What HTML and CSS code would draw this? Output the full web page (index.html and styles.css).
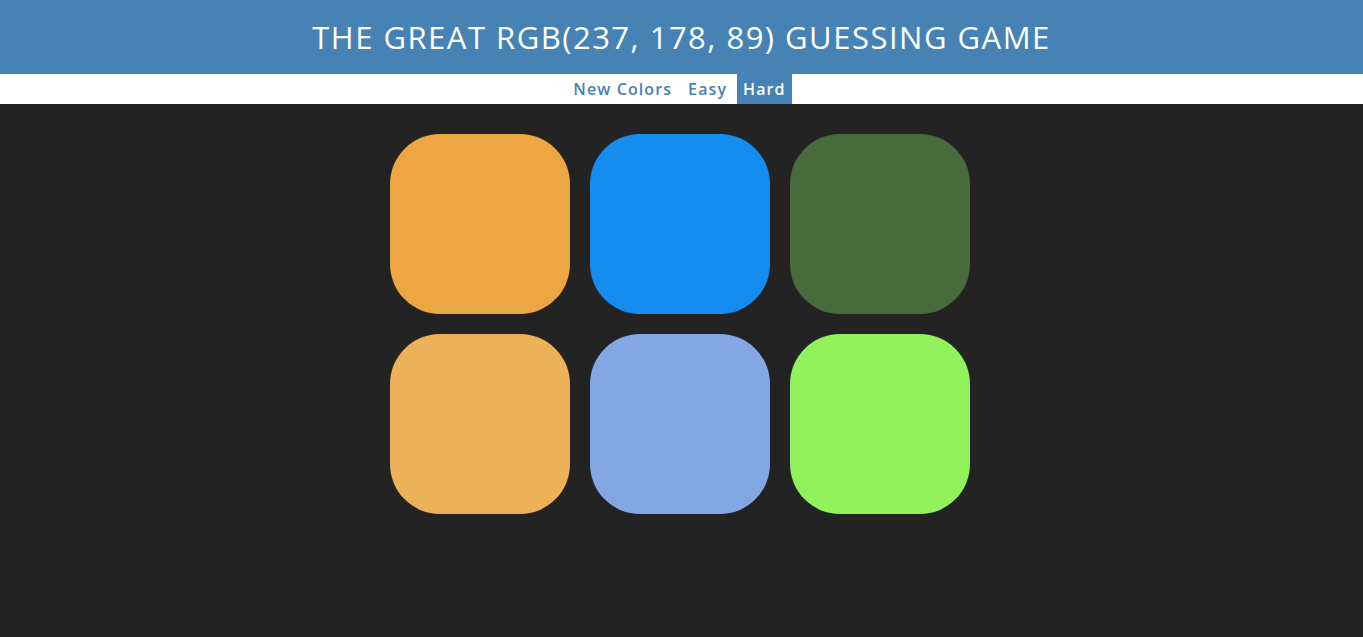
FILE: index.html
```html
<!DOCTYPE html>
<html>
<head>
<meta charset="utf-8">
<link rel="stylesheet" href="styles.css">
</head>
<body>
<h1 class="title">THE GREAT <span class="rgb">RGB(237, 178, 89)</span> GUESSING GAME</h1>
<div class="stripe">
  <button class="btn">New Colors</button>
  <button class="btn">Easy</button>
  <button class="btn selected">Hard</button>
</div>
<div class="container">
  <div class="square" style="background: rgb(236, 166, 66)"></div>
  <div class="square" style="background: rgb(21, 141, 240)"></div>
  <div class="square" style="background: rgb(72, 107, 59)"></div>
  <div class="square" style="background: rgb(237, 178, 89)"></div>
  <div class="square" style="background: rgb(131, 167, 227)"></div>
  <div class="square" style="background: rgb(145, 242, 91)"></div>
</div>
</body>
</html>
```
FILE: styles.css
```css
html, body {
  margin: 0;
  padding: 0;
}
body {
  background: #232323;
  font-family: "Open Sans", "DejaVu Sans", sans-serif;
}
.title {
  margin: 0;
  height: 74px;
  background: #4682b4;
  color: #fff;
  font-weight: 400;
  font-size: 31px;
  letter-spacing: 1.5px;
  line-height: 74px;
  text-align: center;
}
.stripe {
  height: 30px;
  background: #fff;
  display: flex;
  justify-content: center;
  align-items: stretch;
  padding-right: 4px;
}
.btn {
  border: none;
  background: none;
  color: #4682b4;
  font-family: "Open Sans", "DejaVu Sans", sans-serif;
  font-weight: 600;
  font-size: 16px;
  letter-spacing: 1.1px;
  padding: 0 6px;
  margin: 0 2px;
  height: 30px;
  cursor: pointer;
}
.btn.selected {
  background: #4682b4;
  color: #fff;
}
.container {
  width: 600px;
  padding-right: 3px;
  margin: 20px auto 0;
  display: flex;
  flex-wrap: wrap;
}
.square {
  width: 180px;
  height: 180px;
  margin: 10px;
  border-radius: 50px;
}
```
